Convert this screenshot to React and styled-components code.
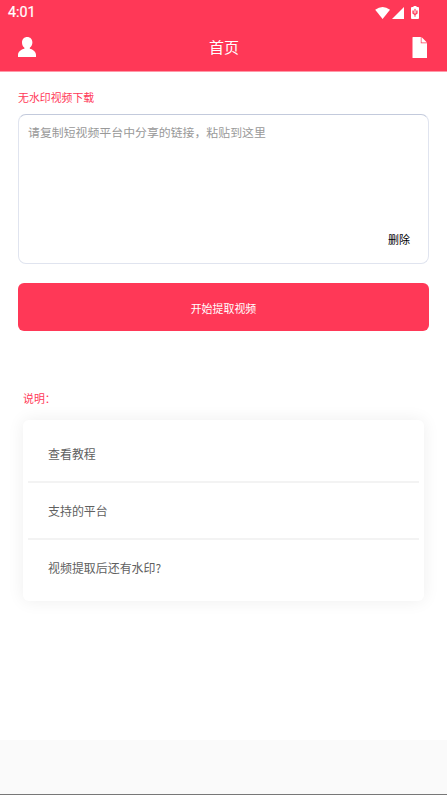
import React from 'react';
import styled, { createGlobalStyle } from 'styled-components';

const Global = createGlobalStyle`
  * { box-sizing: border-box; }
  body {
    margin: 0;
    overflow: hidden;
    background: #fff;
    font-family: 'Noto Sans CJK SC', sans-serif;
  }
`;

const Screen = styled.div`
  height: 795px;
  display: flex;
  flex-direction: column;
`;

const Header = styled.header`
  height: 72px;
  flex: none;
  background: #ff3857;
  color: #fff;
  border-bottom: 1px solid #ff98a8;
`;

const StatusBar = styled.div`
  height: 24px;
  padding: 1px 27px 0 8px;
  display: flex;
  align-items: center;
  justify-content: space-between;
  font-family: Roboto, sans-serif;
  font-size: 14.3px;
  line-height: 23px;
  font-weight: 400;
  -webkit-text-stroke: 0.2px #fff;
`;

const StatusIcons = styled.div`
  display: flex;
`;

const NavBar = styled.div`
  height: 47px;
  padding: 0 19px 0 18px;
  display: grid;
  grid-template-columns: 18px 1fr 16px;
  align-items: center;
`;

const NavTitle = styled.h1`
  margin: 0;
  padding-bottom: 2px;
  font-size: 15px;
  line-height: 22px;
  font-weight: 400;
  text-align: center;
`;

const Icon = styled.svg`
  display: block;
  fill: currentColor;
`;

const Content = styled.main`
  flex: 1;
  padding: 17px 18px 0;
`;

const Label = styled.h2`
  margin: 0;
  height: 18px;
  font-size: 10.9px;
  line-height: 16px;
  font-weight: 400;
  color: #ff3857;
`;

const LinkBox = styled.div`
  height: 150px;
  margin-top: 7px;
  padding: 8px 18px 15px 9px;
  display: flex;
  flex-direction: column;
  justify-content: space-between;
  border: 1px solid #e0e4ef;
  border-top-color: #c3cadc;
  border-radius: 8px;
`;

const Hint = styled.div`
  font-size: 11.9px;
  line-height: 18px;
  color: #999;
`;

const DeleteButton = styled.button`
  align-self: flex-end;
  padding: 0;
  border: 0;
  background: none;
  font: inherit;
  font-size: 11px;
  line-height: 18px;
  color: #000;
`;

const SubmitButton = styled.button`
  display: block;
  width: 100%;
  height: 48px;
  margin-top: 19px;
  padding: 1px 0 0;
  border: 0;
  border-radius: 6px;
  background: #ff3857;
  color: #fff;
  font: inherit;
  font-size: 10.95px;
  line-height: 18px;
`;

const Help = styled.section`
  margin: 59px 5px 0;
`;

const HelpCard = styled.div`
  height: 181px;
  margin-top: 12px;
  padding: 5px 5px 0;
  border-radius: 6px;
  background: #fff;
  box-shadow: 0 0 17px rgba(0, 0, 0, 0.07);
`;

const HelpRow = styled.div`
  height: ${(p) => p.$height}px;
  padding: 0 20px;
  display: flex;
  align-items: center;
  font-size: 11.95px;
  line-height: 18px;
  color: #606060;
  border-bottom: ${(p) => (p.$last ? 'none' : '2px solid #f3f3f3')};

  &:first-child {
    padding-top: 2px;
  }
`;

const Footer = styled.footer`
  height: 55px;
  flex: none;
  background: #fafafa;
  border-bottom: 1px solid #777;
`;

const rows = [
  { text: '查看教程', height: 58 },
  { text: '支持的平台', height: 57 },
  { text: '视频提取后还有水印?', height: 55 },
];

export default function App() {
  return (
    <Screen>
      <Global />
      <Header>
        <StatusBar>
          <span>4:01</span>
          <StatusIcons>
            <Icon width="45" height="14" viewBox="0 0 45 14">
              <path d="M0.2 3.8Q7.6-2 15 3.8L7.6 13Z" />
              <path d="M17 13L29 1V13Z" />
              <path
                fillRule="evenodd"
                d="M38.5 0H41.5V1H43Q44 1 44 2V12Q44 13 43 13H37Q36 13 36 12V2Q36 1 37 1H38.5ZM40 2.5L39 4.2H39.6V7.7L38.8 7V4.5H37.4V7.5L39.5 9V10.7H40.5V9L42.6 7.5V4.5H41.2V7L40.4 7.7V4.2H41L40 2.5Z"
              />
            </Icon>
          </StatusIcons>
        </StatusBar>
        <NavBar>
          <Icon width="18" height="21" viewBox="0 0 18 21">
            <path d="M9.2 0C12.2 0 14.4 2.2 14.4 5.3C14.4 7.8 13.4 9.8 11.8 10.8V11.8C15 12.6 18 14.7 18 18V20H0V18C0 14.7 3 12.6 6.4 11.8V10.8C4.8 9.8 4 7.8 4 5.3C4 2.2 6.2 0 9.2 0Z" />
          </Icon>
          <NavTitle>首页</NavTitle>
          <Icon width="16" height="21" viewBox="0 0 16 21">
            <path d="M1 0H8.8V6.2H15V21H1Q.5 21 .5 20.5V.5Q.5 0 1 0ZM9.5 0L15 5.6H9.5Z" />
          </Icon>
        </NavBar>
      </Header>
      <Content>
        <Label>无水印视频下载</Label>
        <LinkBox>
          <Hint>请复制短视频平台中分享的链接，粘贴到这里</Hint>
          <DeleteButton>删除</DeleteButton>
        </LinkBox>
        <SubmitButton>开始提取视频</SubmitButton>
        <Help>
          <Label>说明：</Label>
          <HelpCard>
            {rows.map((row, i) => (
              <HelpRow key={row.text} $height={row.height} $last={i === rows.length - 1}>
                {row.text}
              </HelpRow>
            ))}
          </HelpCard>
        </Help>
      </Content>
      <Footer />
    </Screen>
  );
}
